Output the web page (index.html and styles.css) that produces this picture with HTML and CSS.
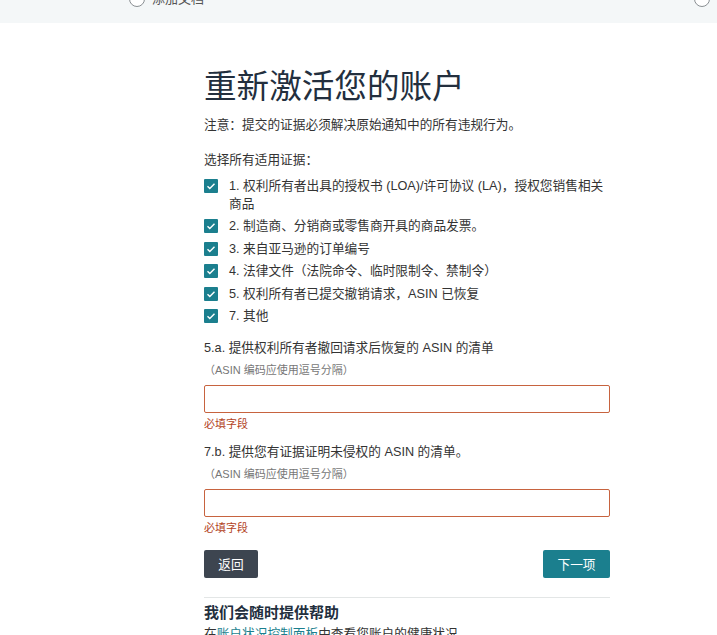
FILE: index.html
```html
<!DOCTYPE html>
<html>
<head>
    <title>重新激活您的账户</title>
    <link rel="stylesheet" href="styles.css">
</head>
<body>
<div class="topbar">
    <div class="steps">
        <div class="step"><span class="step-dot"></span>添加文档</div>
        <div class="step step-end"><span class="step-dot"></span></div>
    </div>
</div>

<div class="main">
    <h1 class="title">重新激活您的账户</h1>
    <p class="notice">注意：提交的证据必须解决原始通知中的所有违规行为。</p>

    <p class="select-label">选择所有适用证据：</p>
    <ul class="checklist">
        <li><span class="check"><svg viewBox="0 0 14 14" width="14" height="14"><path d="M3.5 7.2l2.3 2.3 4.7-4.8" fill="none" stroke="#fff" stroke-width="1.4"/></svg></span><span>1. 权利所有者出具的授权书 (LOA)/许可协议 (LA)，授权您销售相关商品</span></li>
        <li><span class="check"><svg viewBox="0 0 14 14" width="14" height="14"><path d="M3.5 7.2l2.3 2.3 4.7-4.8" fill="none" stroke="#fff" stroke-width="1.4"/></svg></span><span>2. 制造商、分销商或零售商开具的商品发票。</span></li>
        <li><span class="check"><svg viewBox="0 0 14 14" width="14" height="14"><path d="M3.5 7.2l2.3 2.3 4.7-4.8" fill="none" stroke="#fff" stroke-width="1.4"/></svg></span><span>3. 来自亚马逊的订单编号</span></li>
        <li><span class="check"><svg viewBox="0 0 14 14" width="14" height="14"><path d="M3.5 7.2l2.3 2.3 4.7-4.8" fill="none" stroke="#fff" stroke-width="1.4"/></svg></span><span>4. 法律文件（法院命令、临时限制令、禁制令）</span></li>
        <li><span class="check"><svg viewBox="0 0 14 14" width="14" height="14"><path d="M3.5 7.2l2.3 2.3 4.7-4.8" fill="none" stroke="#fff" stroke-width="1.4"/></svg></span><span>5. 权利所有者已提交撤销请求，ASIN 已恢复</span></li>
        <li><span class="check"><svg viewBox="0 0 14 14" width="14" height="14"><path d="M3.5 7.2l2.3 2.3 4.7-4.8" fill="none" stroke="#fff" stroke-width="1.4"/></svg></span><span>7. 其他</span></li>
    </ul>

    <div class="field">
        <label class="field-label">5.a. 提供权利所有者撤回请求后恢复的 ASIN 的清单</label>
        <div class="hint">（ASIN 编码应使用逗号分隔）</div>
        <input type="text" class="asin-input">
        <div class="error">必填字段</div>
    </div>

    <div class="field">
        <label class="field-label">7.b. 提供您有证据证明未侵权的 ASIN 的清单。</label>
        <div class="hint">（ASIN 编码应使用逗号分隔）</div>
        <input type="text" class="asin-input">
        <div class="error">必填字段</div>
    </div>

    <div class="actions">
        <button type="button" class="back-btn">返回</button>
        <button type="button" class="next-btn">下一项</button>
    </div>

    <div class="help">
        <h2>我们会随时提供帮助</h2>
        <p>在<a href="#">账户状况控制面板</a>中查看您账户的健康状况。</p>
    </div>
</div>
</body>
</html>
```

FILE: styles.css
```css
body {
    margin: 0;
    font-family: "Liberation Sans", "Noto Sans CJK SC", sans-serif;
    color: #333;
    background: #fff;
    overflow: hidden;
}
.topbar {
    background: #f4f7f8;
    height: 23px;
    overflow: hidden;
}
.steps {
    display: flex;
    justify-content: space-between;
    margin: -10px 7px 0 129px;
}
.step {
    display: flex;
    align-items: center;
    gap: 7px;
    font-size: 13px;
    color: #555;
    line-height: 18px;
}
.step-dot {
    width: 14px;
    height: 14px;
    border: 1.5px solid #8a8f93;
    border-radius: 50%;
    background: #fff;
}
.main {
    width: 406px;
    margin: 44px 0 0 204px;
}
.title {
    margin: 0;
    font-size: 32.6px;
    line-height: 40px;
    font-weight: 400;
    color: #232f3e;
}
.notice {
    margin: 9px 0 0;
    font-size: 12.7px;
    line-height: 18px;
}
.select-label {
    margin: 17px 0 0;
    font-size: 12.7px;
    line-height: 18px;
}
.checklist {
    list-style: none;
    margin: 8px 0 0;
    padding: 0;
}
.checklist li {
    display: flex;
    gap: 11px;
    font-size: 12.7px;
    line-height: 18px;
    margin-bottom: 4.4px;
}
.check {
    flex: none;
    width: 14px;
    height: 14px;
    margin-top: 2px;
    background: #1b7f8e;
    border-radius: 1px;
    display: flex;
}
.field {
    margin-top: 14px;
}
.field + .field {
    margin-top: 11px;
}
.field-label {
    display: block;
    font-size: 12.7px;
    line-height: 18px;
}
.hint {
    margin-top: 4px;
    font-size: 11px;
    line-height: 18px;
    color: #777;
}
.asin-input {
    display: block;
    box-sizing: border-box;
    width: 100%;
    height: 28px;
    margin-top: 6px;
    border: 1px solid #c7633f;
    border-radius: 2px;
    padding: 4px 8px;
}
.error {
    margin-top: 3px;
    font-size: 11px;
    line-height: 16px;
    color: #b3431d;
}
.actions {
    display: flex;
    justify-content: space-between;
    margin-top: 14px;
    padding-bottom: 19px;
    border-bottom: 1px solid #e3e6e6;
}
.actions button {
    height: 28px;
    border: none;
    border-radius: 2px;
    color: #fff;
    font-family: inherit;
    font-size: 12.7px;
    cursor: pointer;
}
.back-btn {
    width: 54px;
    background: #3d4550;
}
.next-btn {
    width: 67px;
    background: #1b7f8e;
}
.help h2 {
    margin: 5px 0 0;
    font-size: 15px;
    line-height: 20px;
    font-weight: 700;
    color: #232f3e;
}
.help p {
    margin: 2px 0 0;
    font-size: 12.7px;
    line-height: 18px;
}
.help a {
    color: #1b7f8e;
    text-decoration: none;
}
```
